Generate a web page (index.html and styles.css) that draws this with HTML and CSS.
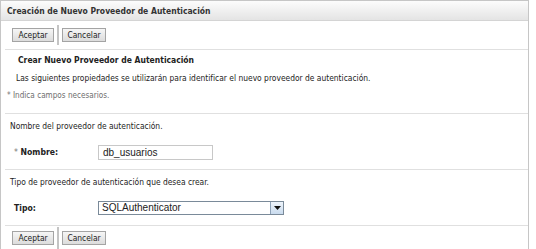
FILE: index.html
```html
<!DOCTYPE html>
<html lang="es">
<head>
<meta charset="utf-8">
<title>Creación de Nuevo Proveedor de Autenticación</title>
<link rel="stylesheet" href="styles.css">
</head>
<body>
<div class="panel">
  <div class="header">Creación de Nuevo Proveedor de Autenticación</div>
  <div class="toolbar">
    <button class="btn btn-ok">Aceptar</button>
    <span class="vsep"></span>
    <button class="btn btn-cancel">Cancelar</button>
  </div>
  <div class="rule"></div>
  <div class="section intro">
    <div class="subtitle">Crear Nuevo Proveedor de Autenticación</div>
    <div class="desc">Las siguientes propiedades se utilizarán para identificar el nuevo proveedor de autenticación.</div>
    <div class="required"><span class="star">*</span> Indica campos necesarios.</div>
  </div>
  <div class="rule"></div>
  <div class="section field-sec">
    <div class="help">Nombre del proveedor de autenticación.</div>
    <div class="field-row row-name">
      <label class="label"><span class="star">*</span> Nombre:</label>
      <div class="input">db_usuarios</div>
    </div>
  </div>
  <div class="rule"></div>
  <div class="section field-sec">
    <div class="help">Tipo de proveedor de autenticación que desea crear.</div>
    <div class="field-row row-type">
      <label class="label">Tipo:</label>
      <div class="select">
        <span class="select-value">SQLAuthenticator</span>
        <span class="select-btn"><svg width="7" height="4" viewBox="0 0 7 4"><path d="M0 0H7L3.5 4Z" fill="#111"/></svg></span>
      </div>
    </div>
  </div>
  <div class="rule"></div>
  <div class="toolbar bottom">
    <button class="btn btn-ok">Aceptar</button>
    <span class="vsep"></span>
    <button class="btn btn-cancel">Cancelar</button>
  </div>
</div>
</body>
</html>
```
FILE: styles.css
```css
html, body {
  margin: 0;
  padding: 0;
  background: #ffffff;
}
body {
  font-family: "DejaVu Sans Condensed", "DejaVu Sans", sans-serif;
  font-stretch: condensed;
  font-size: 8.4px;
  color: #222;
}
.panel {
  width: 529px;
  height: 249px;
  border: 1px solid #c6c6c6;
  border-bottom: none;
  box-sizing: border-box;
  overflow: hidden;
}
.header {
  height: 19px;
  border-bottom: 1px solid #d4d4d4;
  background: linear-gradient(#fcfcfc, #e4e4e4);
  display: flex;
  align-items: center;
  padding-left: 6px;
  font-weight: bold;
  font-size: 8.5px;
  color: #333;
}
.toolbar {
  height: 28px;
  display: flex;
  align-items: center;
  padding-left: 11px;
}
.toolbar.bottom {
  height: 24px;
  align-items: flex-start;
  padding-top: 5px;
}
.btn {
  height: 14px;
  padding: 0 2px;
  margin: 0;
  border: 1px solid #a4a4a4;
  background: linear-gradient(#f6f6f6, #dcdcdc);
  font-family: inherit;
  font-stretch: condensed;
  font-size: 8.4px;
  color: #222;
  line-height: 12px;
  box-sizing: border-box;
}
.btn-ok { width: 42px; }
.btn-cancel { width: 44px; }
.vsep {
  width: 2px;
  height: 20px;
  background: #c4c4c4;
  margin: 0 3px 0 3px;
}
.toolbar.bottom .vsep {
  margin-top: -4px;
  height: 24px;
}
.rule {
  height: 1px;
  background: #e0e0e0;
  margin: 0 0 0 4px;
}
.intro {
  height: 63px;
}
.subtitle {
  height: 20px;
  line-height: 20px;
  padding-left: 17px;
  font-weight: bold;
  font-size: 8.5px;
  color: #222;
}
.desc {
  height: 16px;
  line-height: 16px;
  padding-left: 15px;
}
.required {
  height: 18px;
  line-height: 18px;
  padding-left: 6px;
  font-size: 8.1px;
  color: #6e6e6e;
}
.star {
  color: #777;
  font-weight: normal;
}
.field-sec {
  height: 55px;
}
.help {
  height: 24px;
  line-height: 24px;
  padding-left: 9px;
}
.field-row {
  display: flex;
  align-items: center;
  padding-left: 13px;
}
.row-name {
  height: 31px;
  align-items: flex-start;
  padding-top: 9px;
  box-sizing: border-box;
}
.row-type {
  height: 27px;
}
.label {
  width: 84px;
  font-weight: bold;
  font-size: 8.6px;
  color: #222;
}
.input {
  width: 115px;
  height: 15px;
  margin-top: -2px;
  border: 1px solid #c8c8c8;
  box-sizing: border-box;
  padding-left: 4px;
  font-family: "Liberation Sans", Arial, sans-serif;
  font-size: 10px;
  line-height: 13px;
  color: #222;
}
.select {
  width: 186px;
  height: 14px;
  border: 1px solid #7a8a99;
  box-sizing: border-box;
  display: flex;
  align-items: stretch;
}
.select-value {
  flex: 1;
  padding-left: 3px;
  font-family: "Liberation Sans", Arial, sans-serif;
  font-size: 10px;
  line-height: 12px;
  color: #222;
}
.select-btn {
  width: 12px;
  border-left: 1px solid #8ea2b8;
  background: linear-gradient(#eef4fb, #c9dbee);
  display: flex;
  align-items: center;
  justify-content: center;
}
```
